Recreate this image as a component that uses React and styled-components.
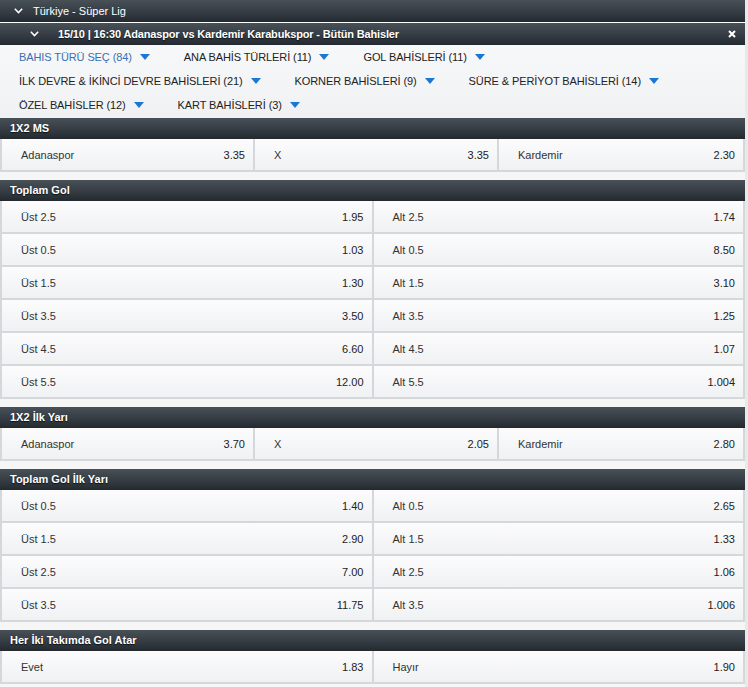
import React from "react";
import styled, { createGlobalStyle } from "styled-components";

const GlobalStyle = createGlobalStyle`
	html, body {
		margin: 0;
		padding: 0;
		background: #e9e9ea;
	}
	body {
		font-family: "Liberation Sans", Arial, sans-serif;
		font-size: 11px;
		color: #333;
	}
`;

const Page = styled.div`
	width: 745px;
	background: #f6f6f7;
	min-height: 687px;
`;

const darkBar = `
	background: linear-gradient(to bottom, #485058 0%, #353c43 55%, #23292f 100%);
	color: #fff;
`;

const LeagueBar = styled.div`
	${darkBar}
	height: 22px;
	display: flex;
	align-items: center;
	padding-left: 14px;
	gap: 10px;
	border-bottom: 1px solid #fff;
`;

const MatchBar = styled.div`
	${darkBar}
	height: 22px;
	display: flex;
	align-items: center;
	padding: 0 9px 0 30px;
	gap: 19px;
	font-weight: bold;
	letter-spacing: -0.15px;
	text-shadow: 0 1px 1px rgba(0, 0, 0, 0.6);
`;

const MatchTitle = styled.span`
	flex: 1;
`;

const Filters = styled.div`
	background: linear-gradient(to bottom, #f7f8f9, #f0f1f3);
	display: flex;
	flex-wrap: wrap;
	padding: 0 0 1px 19px;
`;

const FilterItem = styled.div`
	height: 24px;
	display: flex;
	align-items: center;
	gap: 8px;
	margin-right: 34px;
	letter-spacing: -0.1px;
	text-transform: uppercase;
	color: ${(p) => (p.active ? "#3a6fb4" : "#222")};
	cursor: pointer;
`;

const Caret = styled.span`
	width: 0;
	height: 0;
	border-left: 5px solid transparent;
	border-right: 5px solid transparent;
	border-top: 6px solid #1a78d4;
`;

const Section = styled.div`
	margin-bottom: 8px;
`;

const SectionHead = styled.div`
	${darkBar}
	height: 21px;
	line-height: 21px;
	padding-left: 10px;
	font-weight: bold;
	text-shadow: 0 1px 1px rgba(0, 0, 0, 0.7);
`;

const Grid = styled.div`
	display: grid;
	grid-template-columns: ${(p) => p.cols};
	gap: 2px;
	padding: 0 2px 2px;
	background: #d4d8db;
`;

const Cell = styled.div`
	height: 31px;
	display: flex;
	align-items: center;
	justify-content: space-between;
	padding: 0 8px 0 19px;
	background: linear-gradient(to bottom, #fcfcfd, #f0f1f3);
	cursor: pointer;
	&:hover {
		background: #e8ecf0;
	}
`;

const Odd = styled.span`
	color: #222;
`;

const Chevron = () => (
	<svg width="9" height="6" viewBox="0 0 9 6">
		<polyline points="0.8,0.8 4.5,4.6 8.2,0.8" fill="none" stroke="#fff" strokeWidth="1.5" />
	</svg>
);

const CloseIcon = () => (
	<svg width="8" height="8" viewBox="0 0 8 8">
		<path d="M1 1 L7 7 M7 1 L1 7" stroke="#fff" strokeWidth="2" />
	</svg>
);

const filters = [
	["Bahis Türü Seç (84)", true],
	["ANA BAHİS TÜRLERİ (11)"],
	["GOL BAHİSLERİ (11)"],
	["İLK DEVRE & İKİNCİ DEVRE BAHİSLERİ (21)"],
	["KORNER BAHİSLERİ (9)"],
	["SÜRE & PERİYOT BAHİSLERİ (14)"],
	["ÖZEL BAHİSLER (12)"],
	["KART BAHİSLERİ (3)"],
];

const three = "251px 242px 1fr";
const two = "1fr 1fr";

const sections = [
	{
		title: "1X2 MS",
		cols: three,
		cells: [["Adanaspor", "3.35"], ["X", "3.35"], ["Kardemir", "2.30"]],
	},
	{
		title: "Toplam Gol",
		cols: two,
		cells: [
			["Üst 2.5", "1.95"], ["Alt 2.5", "1.74"],
			["Üst 0.5", "1.03"], ["Alt 0.5", "8.50"],
			["Üst 1.5", "1.30"], ["Alt 1.5", "3.10"],
			["Üst 3.5", "3.50"], ["Alt 3.5", "1.25"],
			["Üst 4.5", "6.60"], ["Alt 4.5", "1.07"],
			["Üst 5.5", "12.00"], ["Alt 5.5", "1.004"],
		],
	},
	{
		title: "1X2 İlk Yarı",
		cols: three,
		cells: [["Adanaspor", "3.70"], ["X", "2.05"], ["Kardemir", "2.80"]],
	},
	{
		title: "Toplam Gol İlk Yarı",
		cols: two,
		cells: [
			["Üst 0.5", "1.40"], ["Alt 0.5", "2.65"],
			["Üst 1.5", "2.90"], ["Alt 1.5", "1.33"],
			["Üst 2.5", "7.00"], ["Alt 2.5", "1.06"],
			["Üst 3.5", "11.75"], ["Alt 3.5", "1.006"],
		],
	},
	{
		title: "Her İki Takımda Gol Atar",
		cols: two,
		cells: [["Evet", "1.83"], ["Hayır", "1.90"]],
	},
];

export default function App() {
	return (
		<Page>
			<GlobalStyle />
			<LeagueBar>
				<Chevron />
				<span>Türkiye - Süper Lig</span>
			</LeagueBar>
			<MatchBar>
				<Chevron />
				<MatchTitle>15/10 | 16:30 Adanaspor vs Kardemir Karabukspor - Bütün Bahisler</MatchTitle>
				<CloseIcon />
			</MatchBar>
			<Filters>
				{filters.map(([name, active]) => (
					<FilterItem key={name} active={active}>
						{name}
						<Caret />
					</FilterItem>
				))}
			</Filters>
			{sections.map((s) => (
				<Section key={s.title}>
					<SectionHead>{s.title}</SectionHead>
					<Grid cols={s.cols}>
						{s.cells.map(([label, odd], i) => (
							<Cell key={i}>
								<span>{label}</span>
								<Odd>{odd}</Odd>
							</Cell>
						))}
					</Grid>
				</Section>
			))}
		</Page>
	);
}
